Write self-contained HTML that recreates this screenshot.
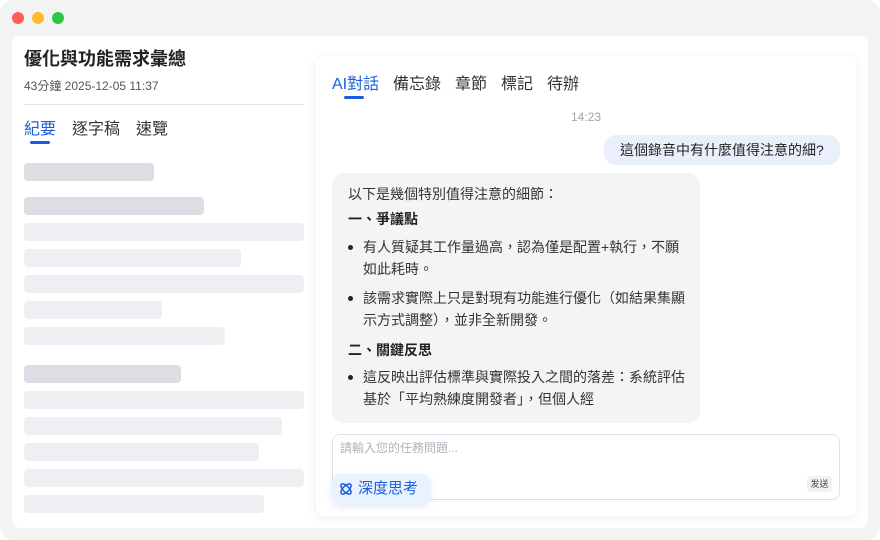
<!DOCTYPE html>
<html><head><meta charset="utf-8"><style>
*{margin:0;padding:0;box-sizing:border-box}
body{width:880px;height:540px;background:#fff;font-family:"Liberation Sans","Noto Sans CJK TC",sans-serif;position:relative;overflow:hidden;color:#222}
.frame{position:absolute;left:0;top:0;width:880px;height:540px;background:#f2f3f3;border-radius:14px}
.dot{position:absolute;top:12px;width:12px;height:12px;border-radius:50%}
.inner{position:absolute;left:12px;top:36px;width:856px;height:492px;background:#fff;border-radius:8px}
.a{position:absolute;white-space:nowrap;line-height:1.2}
.bar{position:absolute;left:24px;height:18px;border-radius:4px;background:#eeeff2}
.bar.d{background:#dddee3}
.card{position:absolute;left:316px;top:56px;width:540px;height:460px;background:#fff;border-radius:8px;box-shadow:0 2px 10px rgba(0,0,0,0.07)}
.li{position:absolute;left:348px;font-size:14px;line-height:22px;color:#333}
.li:before{content:"";position:absolute;left:0;top:9px;width:5px;height:5px;border-radius:50%;background:#222}
.li span{display:block;padding-left:15px}
</style></head><body>
<div class="frame"></div>
<div class="dot" style="left:12px;background:#fe5f57"></div>
<div class="dot" style="left:32px;background:#febc2e"></div>
<div class="dot" style="left:52px;background:#28c840"></div>
<div class="inner"></div>
<div class="a" style="left:24px;top:49px;font-size:18px;font-weight:bold;color:#222">優化與功能需求彙總</div>
<div class="a" style="left:24px;top:79px;font-size:12px;color:#555">43分鐘 2025-12-05 11:37</div>
<div style="position:absolute;left:24px;top:104px;width:280px;height:1px;background:#e2e2e8"></div>
<div class="a" style="left:24px;top:120px;font-size:16px;color:#1a5fe0">紀要</div>
<div style="position:absolute;left:30px;top:141px;width:20px;height:3px;border-radius:2px;background:#1a5fe0"></div>
<div class="a" style="left:72px;top:120px;font-size:16px;color:#333">逐字稿</div>
<div class="a" style="left:136px;top:120px;font-size:16px;color:#333">速覽</div>
<div class="bar d" style="top:163px;width:130px"></div>
<div class="bar d" style="top:197px;width:180px"></div>
<div class="bar" style="top:223px;width:280px"></div>
<div class="bar" style="top:249px;width:217px"></div>
<div class="bar" style="top:275px;width:280px"></div>
<div class="bar" style="top:301px;width:138px"></div>
<div class="bar" style="top:327px;width:201px"></div>
<div class="bar d" style="top:365px;width:157px"></div>
<div class="bar" style="top:391px;width:280px"></div>
<div class="bar" style="top:417px;width:258px"></div>
<div class="bar" style="top:443px;width:235px"></div>
<div class="bar" style="top:469px;width:280px"></div>
<div class="bar" style="top:495px;width:240px"></div>
<div class="card"></div>
<div class="a" style="left:332px;top:75px;font-size:16px;color:#1a5fe0">AI對話</div>
<div style="position:absolute;left:344px;top:96px;width:20px;height:3px;border-radius:2px;background:#1a5fe0"></div>
<div class="a" style="left:393px;top:75px;font-size:16px;color:#333">備忘錄</div>
<div class="a" style="left:455px;top:75px;font-size:16px;color:#333">章節</div>
<div class="a" style="left:501px;top:75px;font-size:16px;color:#333">標記</div>
<div class="a" style="left:547px;top:75px;font-size:16px;color:#333">待辦</div>
<div class="a" style="left:571px;top:110px;font-size:12px;color:#a0a4ad">14:23</div>
<div style="position:absolute;left:604px;top:135px;width:236px;height:30px;border-radius:12px;background:#eaf0fb"></div>
<div class="a" style="left:620px;top:142px;font-size:14px;color:#222">這個錄音中有什麼值得注意的細?</div>
<div style="position:absolute;left:332px;top:173px;width:368px;height:250px;border-radius:12px;background:#f3f4f4"></div>
<div class="a" style="left:348px;top:186px;font-size:14px;color:#333">以下是幾個特別值得注意的細節：</div>
<div class="a" style="left:348px;top:211px;font-size:14px;color:#222;font-weight:bold">一、爭議點</div>
<div class="li" style="top:236px;width:345px"><span>有人質疑其工作量過高，認為僅是配置+執行，不願<br>如此耗時。</span></div>
<div class="li" style="top:287px;width:345px"><span>該需求實際上只是對現有功能進行優化（如結果集顯<br>示方式調整），並非全新開發。</span></div>
<div class="a" style="left:348px;top:342px;font-size:14px;color:#222;font-weight:bold">二、關鍵反思</div>
<div class="li" style="top:366px;width:345px"><span>這反映出評估標準與實際投入之間的落差：系統評估<br>基於「平均熟練度開發者」，但個人經</span></div>
<div style="position:absolute;left:332px;top:434px;width:508px;height:66px;border:1px solid #dfe0e6;border-radius:8px"></div>
<div class="a" style="left:340px;top:441px;font-size:12px;color:#b0b3ba">請輸入您的任務問題...</div>
<div style="position:absolute;left:807px;top:476px;width:25px;height:16px;border-radius:4px;background:#f0f1f2;font-size:9px;color:#444;text-align:center;line-height:16px">发送</div>
<div style="position:absolute;left:332px;top:474px;width:98px;height:30px;border-radius:8px;background:#eaf1ff;box-shadow:0 3px 8px rgba(60,110,220,0.15)"></div>
<svg style="position:absolute;left:338px;top:481px" width="16" height="16" viewBox="0 0 16 16" fill="none" stroke="#1a5fe0" stroke-width="1.5"><ellipse cx="8" cy="8" rx="6.5" ry="3" transform="rotate(45 8 8)"/><ellipse cx="8" cy="8" rx="6.5" ry="3" transform="rotate(-45 8 8)"/></svg>
<div class="a" style="left:358px;top:480px;font-size:15px;color:#1a5fe0">深度思考</div>
</body></html>
